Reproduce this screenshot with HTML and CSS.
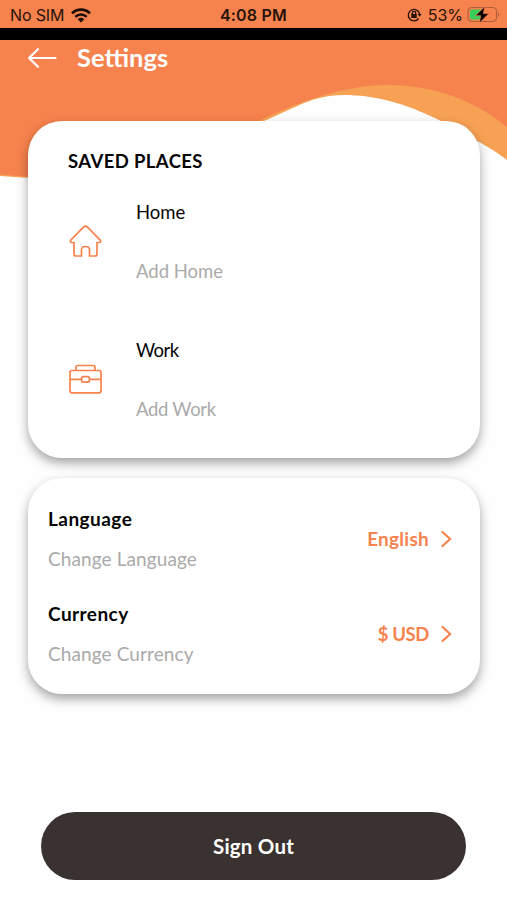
FILE: index.html
```html
<!DOCTYPE html>
<html lang="en">
<head>
<meta charset="utf-8">
<title>Settings</title>
<link rel="stylesheet" href="styles.css">
</head>
<body>
<div class="screen">
  <svg class="wave" viewBox="0 0 507 190" aria-hidden="true">
    <path fill="#f7a154" d="M0 40H507V160C495 151 485 145 477 141L441 121C405 103 375 95 343 95C310 96 300 106 264 121L150 170L30 178L0 176Z"/>
    <path fill="#f6824d" d="M0 40H507V127C470 97 430 85 385 85C340 86 300 102 258 121L150 165L30 177L0 174.500Z"/>
  </svg>
  <header class="status">
    <div class="status-left">
      <span class="carrier">No SIM</span>
      <svg class="wifi" viewBox="0 0 20 15"><g fill="none" stroke="#1c0d06" stroke-width="2.700"><path d="M1 5.400C6 .4 14 .4 19 5.400"/><path d="M4.300 8.900C7.500 5.700 12.500 5.700 15.700 8.900"/></g><path fill="#1c0d06" d="M6.700 11.200Q10 8.500 13.300 11.200L10 14.600Z"/></svg>
    </div>
    <span class="clock">4:08 PM</span>
    <div class="status-right">
      <svg class="lock" viewBox="0 0 15 14"><g fill="none" stroke="#27130a" stroke-width="1.300"><path d="M11.600 10.500A5.700 5.700 0 1 1 12.600 6.200"/><path d="M5.300 6.500V5A1.700 1.700 0 0 1 8.700 5V6.500"/></g><path fill="#27130a" d="M4.300 6H9.700V10H4.300ZM10.600 6H14.700L12.600 8.800Z"/></svg>
      <span class="percent">53%</span>
      <svg class="battery" viewBox="0 0 34 18"><rect x="1" y="1.500" width="28.500" height="14" rx="4" fill="none" stroke="#ae603d" stroke-width="1.200"/><path d="M31 6.500Q33.500 8.700 31 11Z" fill="#ae603d"/><path d="M5 3.500H14V13.500H5Q3 13.500 3 11.500V5.500Q3 3.500 5 3.500Z" fill="#37cf59"/><path d="M17.600 .8L8.400 9.700H13.600L12.400 17L21.900 7.600H16.500Z" fill="#080402" stroke="#f6824d" stroke-width=".7"/></svg>
    </div>
  </header>
  <nav class="titlebar">
    <svg class="back" viewBox="0 0 30 22"><path d="M28.500 11H2M11 2.200L2 11L11 19.800" fill="none" stroke="#fff" stroke-width="2.200" stroke-linecap="round" stroke-linejoin="round"/></svg>
    <h1 class="title">Settings</h1>
  </nav>
  <main class="content">
    <section class="card places">
      <h2 class="heading">SAVED PLACES</h2>
      <div class="place">
        <svg class="place-icon" viewBox="0 0 34 34"><path d="M5 18V30Q5 32 7 32H12.500V25.500Q12.500 22.500 16.500 22.500Q20.500 22.500 20.500 25.500V32H26Q28 32 28 30V18.500H30.500Q32.500 17.800 31 15.800L18.500 3.200Q16.500 1.300 14.500 3.200L2 15.800Q.5 17.800 2.500 18.500H5"/></svg>
        <div class="place-text"><span class="name">Home</span><span class="hint add-home">Add Home</span></div>
      </div>
      <div class="place">
        <svg class="place-icon" viewBox="0 0 34 34"><rect x="1" y="8.500" width="31" height="22.300" rx="2"/><path d="M7 8.500V5.200Q7 3.500 8.700 3.500H24.300Q26 3.500 26 5.200V8.500M1 17.300H12.500M20.500 17.300H32"/><rect x="12.500" y="14.600" width="8" height="5.500" rx="2"/></svg>
        <div class="place-text"><span class="name work">Work</span><span class="hint add-work">Add Work</span></div>
      </div>
    </section>
    <section class="card options">
      <div class="option">
        <div class="option-text"><span class="label language">Language</span><span class="hint change-language">Change Language</span></div>
        <span class="value english">English</span>
        <svg class="chevron" viewBox="0 0 11 18"><path d="M1.500 2L9.200 9L1.500 16"/></svg>
      </div>
      <div class="option">
        <div class="option-text"><span class="label currency">Currency</span><span class="hint change-currency">Change Currency</span></div>
        <span class="value usd">$ USD</span>
        <svg class="chevron" viewBox="0 0 11 18"><path d="M1.500 2L9.200 9L1.500 16"/></svg>
      </div>
    </section>
  </main>
  <button class="signout">Sign Out</button>
</div>
</body>
</html>
```

FILE: styles.css
```css
* { box-sizing: border-box; }
body { margin: 0; background: #fefefe; font-family: Lato, "Liberation Sans", sans-serif; color: #050505; }
svg { display: block; flex: none; }
h1, h2 { margin: 0; }
.screen { position: relative; isolation: isolate; width: 507px; height: 900px; overflow: hidden; display: flex; flex-direction: column; }
.wave { position: absolute; z-index: -1; top: 0; left: 0; width: 507px; height: 190px; }
.status { height: 40px; flex: none; background: #f6824d; border-bottom: 12px solid #000; display: grid; grid-template-columns: 1fr auto 1fr; align-items: center; padding: 2px 6px 0 10px; font-family: Inter, sans-serif; font-size: 16px; line-height: 20px; color: #27130a; }
.status-left, .status-right { display: flex; align-items: center; }
.status-left { gap: 7px; }
.carrier { letter-spacing: -.15px; }
.status-right { justify-content: flex-end; }
.wifi { width: 20px; height: 15px; }
.clock { font-weight: 600; letter-spacing: .2px; margin-right: 4px; }
.lock { width: 15px; height: 14px; margin-right: 6px; }
.percent { margin-right: 4px; }
.battery { width: 34px; height: 18px; }
.titlebar { height: 81px; flex: none; display: flex; align-items: flex-start; padding: 4px 0 0 27px; color: #fff; }
.back { width: 30px; height: 22px; margin-top: 3px; }
.title { margin: -1px 0 0 20px; font-size: 25.5px; line-height: 28px; font-weight: 700; }
.content { display: flex; flex-direction: column; gap: 20px; padding: 0 27px 0 28px; }
.card { background: #fff; border-radius: 34px; box-shadow: 0 5px 11px rgba(0,0,0,.36); }
.places { height: 337px; padding: 28px 40px 0; }
.heading { font-size: 18.5px; line-height: 24px; font-weight: 700; letter-spacing: .38px; }
.place { display: flex; align-items: center; height: 100px; margin-top: 18px; }
.place + .place { margin-top: 38px; }
.place-icon { width: 34px; height: 34px; margin-left: 1px; fill: none; stroke: #f6824d; stroke-width: 1.700; stroke-linejoin: round; }
.place-text { display: flex; flex-direction: column; gap: 35px; margin-left: 33px; }
.name, .hint, .label, .value { font-size: 18.5px; line-height: 24px; white-space: nowrap; }
.work { letter-spacing: -.5px; }
.hint { color: #aaa; }
.add-work { letter-spacing: -.3px; }
.options { height: 216px; padding: 29px 28px 0 20px; display: flex; flex-direction: column; gap: 31px; }
.option { display: flex; align-items: center; height: 64px; }
.option-text { display: flex; flex-direction: column; gap: 16px; flex: 1; }
.label { font-weight: 700; font-size: 19px; letter-spacing: .45px; }
.change-language, .change-currency { font-size: 19px; letter-spacing: .1px; }
.value { color: #f6824d; font-weight: 700; }
.english { font-size: 19px; letter-spacing: .25px; }
.usd { letter-spacing: -.4px; }
.chevron { width: 11px; height: 18px; margin-left: 12px; fill: none; stroke: #f6824d; stroke-width: 2.200; stroke-linecap: round; stroke-linejoin: round; }
.signout { width: 425px; height: 68px; flex: none; margin: 118px 0 0 41px; border: 0; border-radius: 34px; background: #393231; color: #fff; font: 700 20.500px/24px Lato, sans-serif; letter-spacing: .2px; }
```
